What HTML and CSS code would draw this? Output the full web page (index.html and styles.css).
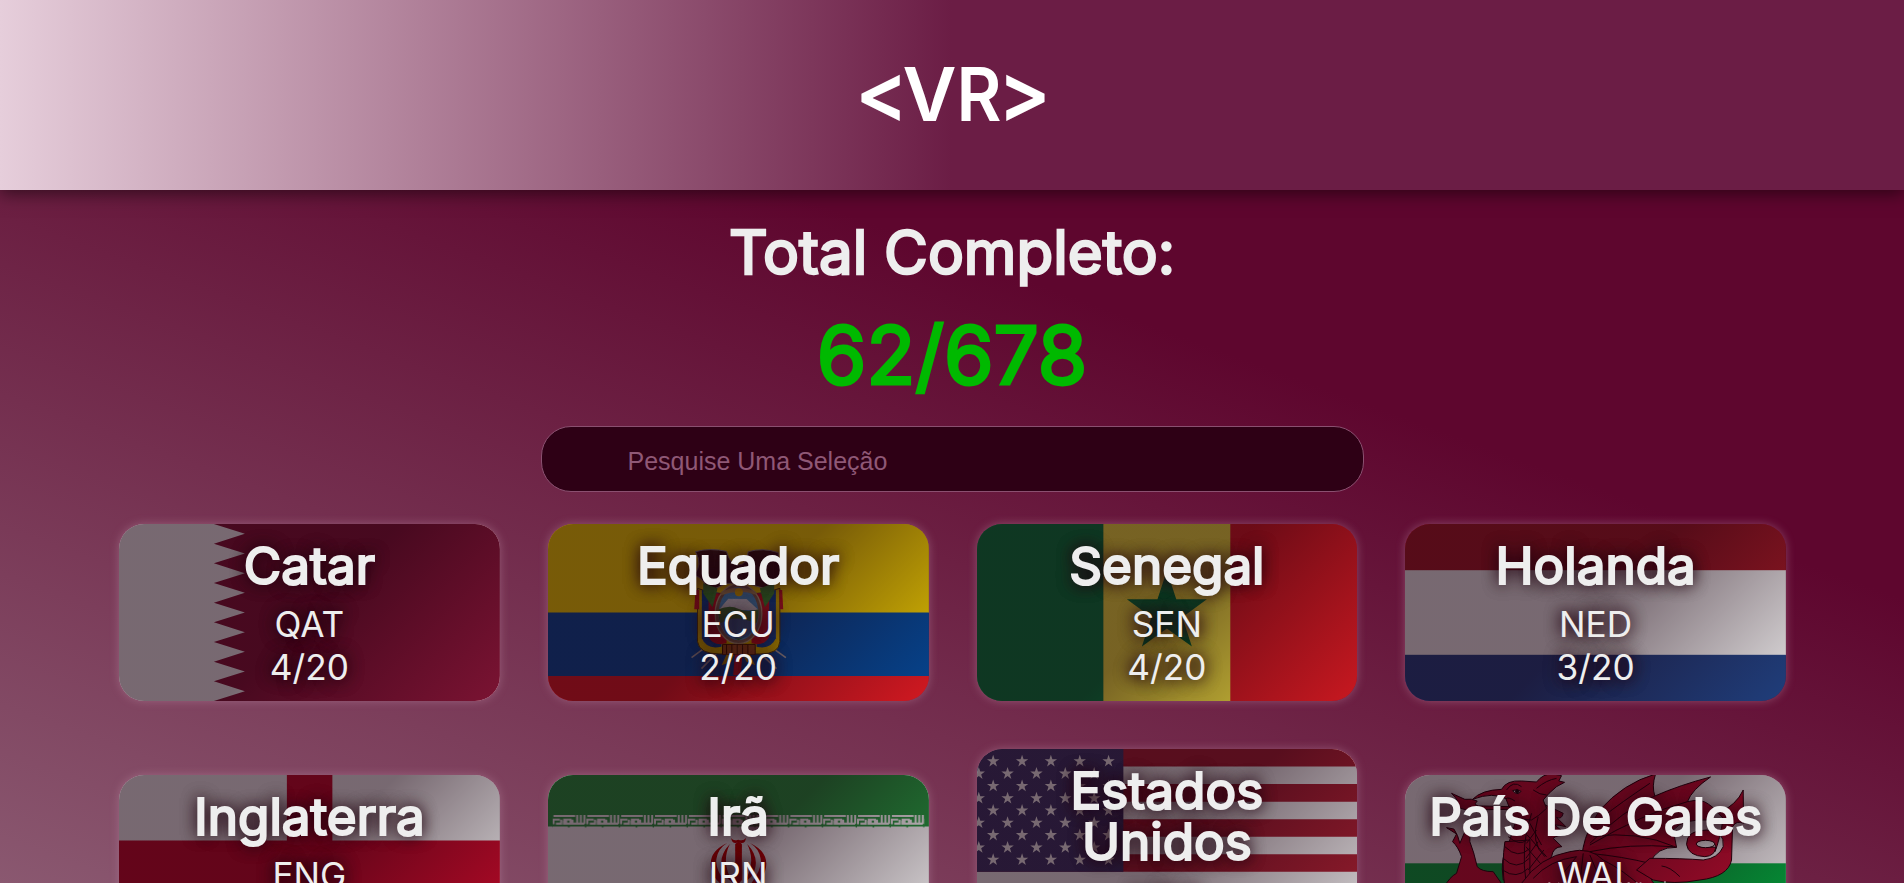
FILE: index.html
```
<!DOCTYPE html>
<html lang="pt-BR">
<head>
<meta charset="utf-8">
<title>Álbum VR</title>
<link rel="stylesheet" href="styles.css">
</head>
<body>
<header class="header">
  <svg class="logo" width="188" height="60" viewBox="0 0 188 60" role="img" aria-label="VR">
    <text class="logo-sign" x="-4" y="58" textLength="53" lengthAdjust="spacingAndGlyphs">&lt;</text>
    <text class="logo-letter" x="43.5" y="57" textLength="54" lengthAdjust="spacingAndGlyphs">V</text>
    <text class="logo-letter" x="97.500" y="57" textLength="45" lengthAdjust="spacingAndGlyphs">R</text>
    <text class="logo-sign" x="139" y="58" textLength="53" lengthAdjust="spacingAndGlyphs">&gt;</text>
  </svg>
</header>
<main class="main">
  <h1 class="total-label">Total Completo:</h1>
  <p class="total-value">62/678</p>
  <input class="search" type="text" placeholder="Pesquise Uma Seleção">
  <section class="teams">
    <article class="card">
      <svg class="flag" viewBox="0 0 381 177" preserveAspectRatio="xMidYMid slice">
        <rect width="381" height="177" fill="#fff"/>
        <path fill="#8a1538" d="M381 0H95L126 9.8 95 19.7 126 29.5 95 39.3 126 49.2 95 59 126 68.8 95 78.7 126 88.5 95 98.3 126 108.2 95 118 126 127.8 95 137.7 126 147.5 95 157.3 126 167.2 95 177H381Z"/>
      </svg>
      <h2 class="name">Catar</h2><p class="info">QAT</p><p class="info">4/20</p>
    </article>
    <article class="card">
      <svg class="flag" viewBox="0 0 381 177" preserveAspectRatio="xMidYMid slice">
        <rect width="381" height="89" fill="#fd0"/>
        <rect y="88.5" width="381" height="64" fill="#034ea2"/>
        <rect y="152" width="381" height="26" fill="#ed1c24"/>
        <g transform="scale(.33333) translate(-54 -42)">
          <path d="M485 443L570 380M768 443L680 380M515 476L570 420M740 476L680 420" stroke="#aaa" stroke-width="5"/>
          <path d="M503 235V395Q508 432 570 432H690Q748 432 750 395V235L700 250H550Z" fill="#e8c400" stroke="#57450a" stroke-width="3"/>
          <path d="M516 240V385Q530 420 575 410V250Z" fill="#0b4ea2"/>
          <path d="M536 250V380Q550 410 590 400V250Z" fill="#d81e28"/>
          <path d="M738 240V385Q722 420 680 410V250Z" fill="#0b4ea2"/>
          <path d="M718 250V380Q702 410 665 400V250Z" fill="#d81e28"/>
          <path d="M497 125Q540 113 590 124Q600 165 626 165Q650 165 655 125Q700 112 745 128Q742 165 765 195Q735 210 720 240L650 220H590L535 245Q525 205 492 195Q520 165 497 125Z" fill="#3d1c16" stroke="#999" stroke-width="3"/>
          <path d="M520 220L563 235 548 292 520 250ZM733 220L690 235 705 292 733 250Z" fill="#3c9b35"/>
          <path d="M497 240H508V298H493ZM748 240H757L760 298H750Z" fill="#d81e28"/>
          <ellipse cx="626" cy="311" rx="70" ry="90" fill="#8b7358" stroke="#cbb78c" stroke-width="4"/>
          <ellipse cx="626" cy="311" rx="60" ry="80" fill="#4fa5dc"/>
          <path d="M567 300L595 266 650 267 686 300Z" fill="#e8eef2"/>
          <path d="M566 298Q600 283 625 296T686 298Q690 360 626 391Q560 360 566 298Z" fill="#3c8a38"/>
          <path d="M572 340Q620 310 680 342L655 378Q625 394 590 375Z" fill="#397bb4"/>
          <path d="M573 246Q626 220 679 246V254Q626 236 573 256Z" fill="#b99f64"/>
          <circle cx="627" cy="247" r="12" fill="#fc0"/>
          <path d="M578 403H676V434H578Z" fill="#a95b24" stroke="#4a250b" stroke-width="3"/>
          <path d="M590 403V434M606 403V434M622 403V434M638 403V434M654 403V434" stroke="#4a250b" stroke-width="3"/>
          <path d="M590 434L575 466 604 455 612 434ZM660 434L676 466 650 455 640 434Z" fill="#c9a400"/>
          <path d="M615 434H638L632 496H610Z" fill="#d81e28"/>
        </g>
      </svg>
      <h2 class="name">Equador</h2><p class="info">ECU</p><p class="info">2/20</p>
    </article>
    <article class="card">
      <svg class="flag" viewBox="0 0 381 177" preserveAspectRatio="xMidYMid slice">
        <rect width="127" height="177" fill="#00853f"/>
        <rect x="126.5" width="127.5" height="177" fill="#fdef42"/>
        <rect x="253.5" width="128" height="177" fill="#e31b23"/>
        <path fill="#00853f" d="M190 46.500L199.400 75.300H230L205.500 93.300 215 122.500 190 104.500 165 122.500 174.500 93.300 150 75.300H180.600Z"/>
      </svg>
      <h2 class="name">Senegal</h2><p class="info">SEN</p><p class="info">4/20</p>
    </article>
    <article class="card">
      <svg class="flag" viewBox="0 0 381 177" preserveAspectRatio="xMidYMid slice">
        <rect width="381" height="47" fill="#ae1c28"/>
        <rect y="46.200" width="381" height="85" fill="#fff"/>
        <rect y="130.800" width="381" height="47" fill="#21468b"/>
      </svg>
      <h2 class="name">Holanda</h2><p class="info">NED</p><p class="info">3/20</p>
    </article>
    <article class="card">
      <svg class="flag" viewBox="0 0 381 177" preserveAspectRatio="xMidYMid slice">
        <rect width="381" height="177" fill="#fff"/>
        <path fill="#ce0b2b" d="M168 0H213.500V65.600H381V111.400H213.500V177H168V111.400H0V65.600H168Z"/>
      </svg>
      <h2 class="name">Inglaterra</h2><p class="info">ENG</p><p class="info">5/20</p>
    </article>
    <article class="card">
      <svg class="flag" viewBox="0 0 381 177" preserveAspectRatio="xMidYMid slice">
        <defs>
          <pattern id="kufic" x="68" y="255" width="101.500" height="38" patternUnits="userSpaceOnUse">
            <path d="M3 3H68M3 11V28M3 14H22M10 26H26V14M32 14H54V26H34V20H44M60 14V26H96M74 0V26M85 0V26M96 0V26" fill="none" stroke="#fff" stroke-width="6"/>
            <path d="M49 30V38M100 30V38" stroke="#239f40" stroke-width="5"/>
          </pattern>
        </defs>
        <rect width="381" height="177" fill="#fff"/>
        <rect width="381" height="51.500" fill="#239f40"/>
        <rect y="124.500" width="381" height="53" fill="#da0000"/>
        <g transform="scale(.33333) translate(-54 -135)">
          <rect x="68" y="255" width="1116" height="38" fill="url(#kufic)"/>
          <g fill="#da0000">
            <path d="M604 324Q610 334 625 329Q641 334 648 324Q647 344 626 337Q606 344 604 324Z"/>
            <path d="M616 342L626 334 636 342V450L626 462 616 450Z"/>
            <path d="M592 339Q520 372 553 440Q575 470 600 475Q553 420 560 385Q565 355 592 339Z"/>
            <path d="M660 339Q732 372 699 440Q677 470 652 475Q699 420 692 385Q687 355 660 339Z"/>
            <path d="M600 342Q555 390 588 440L612 462Q571 400 600 342ZM652 342Q697 390 664 440L640 462Q681 400 652 342Z"/>
          </g>
        </g>
      </svg>
      <h2 class="name">Irã</h2><p class="info">IRN</p><p class="info">3/20</p>
    </article>
    <article class="card">
      <svg class="flag" viewBox="0 0 381 228" preserveAspectRatio="xMidYMid slice">
        <defs>
          <path id="star" fill="#fff" d="M0-6.500L1.500-2H6.200L2.400.8 3.800 5.300 0 2.500-3.800 5.300-2.400.8-6.200-2H-1.500Z"/>
          <g id="row-a"><use href="#star" x="-12.500"/><use href="#star" x="16.300"/><use href="#star" x="45.200"/><use href="#star" x="74"/><use href="#star" x="102.900"/><use href="#star" x="131.700"/></g>
          <g id="row-b"><use href="#star" x="1.900"/><use href="#star" x="30.700"/><use href="#star" x="59.600"/><use href="#star" x="88.400"/><use href="#star" x="117.300"/></g>
        </defs>
        <rect width="381" height="228" fill="#fff"/>
        <path d="M0 8.750H381M0 43.850H381M0 78.950H381M0 114H381M0 149.100H381M0 184.200H381M0 219.300H381" stroke="#b22234" stroke-width="17.600"/>
        <rect width="146.500" height="122.800" fill="#3c3b6e"/>
        <use href="#row-a" y="12.300"/><use href="#row-b" y="24.600"/><use href="#row-a" y="36.900"/><use href="#row-b" y="49.200"/><use href="#row-a" y="61.500"/><use href="#row-b" y="73.800"/><use href="#row-a" y="86.100"/><use href="#row-b" y="98.400"/><use href="#row-a" y="110.700"/>
      </svg>
      <h2 class="name">Estados Unidos</h2><p class="info">USA</p><p class="info">4/20</p>
    </article>
    <article class="card">
      <svg class="flag" viewBox="0 0 381 177" preserveAspectRatio="xMidYMid slice">
        <rect width="381" height="177" fill="#fff"/>
        <rect y="88.300" width="381" height="89" fill="#00b140"/>
        <g transform="scale(.33333) translate(-45 -135)" fill="#d21034" stroke="#26000a" stroke-width="3" stroke-linejoin="round">
          <path d="M580 352Q590 300 630 240Q700 160 797 132Q785 170 795 198Q870 165 962 141Q905 180 893 215Q935 205 955 222Q990 240 960 270Q880 265 850 300L860 352Q800 350 780 400Q770 440 800 470H560Z"/>
          <path d="M795 198Q700 240 600 340M893 215Q760 250 600 345M860 352Q740 300 610 320M850 350Q720 340 600 365M780 160Q690 220 640 260M600 370Q700 380 780 400M598 370Q650 410 690 470" fill="none"/>
          <path d="M780 385Q880 385 940 390Q985 385 1000 350Q1005 300 950 300Q890 300 890 343Q895 378 945 380Q975 378 978 352Q965 350 945 352Q918 350 922 340Q935 330 965 335Q985 345 975 365Q990 330 1000 265L985 250Q1040 225 1060 180L1061 280Q1040 270 1028 290L1025 390Q1015 440 930 450Q850 465 790 450L740 420Z"/>
          <ellipse cx="947" cy="342" rx="28" ry="11" fill="#fff"/>
          <path d="M440 215Q470 225 520 250Q515 270 500 262L528 290Q508 285 495 285L530 315Q500 315 490 325L516 350Q490 350 485 380L430 450H340Q330 380 355 345L385 250Z"/>
          <path d="M248 208Q275 180 335 178Q350 150 395 153L440 156Q460 130 490 132L515 137 507 153 524 157 500 170Q475 190 460 210L470 235Q445 260 425 270L370 265Q358 230 348 206Q310 185 248 208Z"/>
          <path d="M440 175Q470 150 500 145M350 180Q370 150 395 170M348 206Q355 200 375 213M430 180Q450 195 470 195" fill="none"/>
          <path d="M368 182Q380 175 394 184L385 191Q372 190 368 182Z" fill="#eee"/><circle cx="382" cy="184" r="5" fill="#111"/>
          <path d="M185 190L225 208Q245 205 262 213Q245 230 280 228L360 230 360 238 230 240 195 230Q215 218 185 190Z"/>
          <path d="M170 293L192 297Q205 315 210 340L240 270 240 335Q252 365 262 410Q275 425 310 425L345 475H160Q180 440 200 430L215 380Q205 350 188 335L200 312Z"/>
          <path d="M345 335Q335 400 345 475H420V330Z"/>
          <path d="M355 320Q390 350 410 330M345 350Q385 390 420 355M340 385Q380 425 418 385M338 420Q380 450 415 415M425 250Q390 340 410 470M445 260Q420 340 465 380M420 280L455 345M412 315L470 380M408 350L460 410M440 300L410 340M445 335L408 385M462 360L415 420" fill="none"/>
          <path d="M395 460Q450 380 540 365Q600 350 640 390Q700 420 760 475H395Z"/>
          <path d="M430 445Q480 390 560 380L520 430M580 370L570 460M600 375L640 470M815 408Q840 410 870 440" fill="none"/>
        </g>
      </svg>
      <h2 class="name">País De Gales</h2><p class="info">WAL</p><p class="info">3/20</p>
    </article>
  </section>
</main>
<div class="watermark">Ativar o Windows</div>
</body>
</html>
```
FILE: styles.css
```
* {
  margin: 0;
  padding: 0;
  box-sizing: border-box;
}

body {
  height: 100vh;
  overflow: hidden;
  background: linear-gradient(20deg, #8a5870, #5e062e 62%);
  font-family: Inter, "Open Sans", sans-serif;
  color: #eee;
}

.header {
  display: flex;
  justify-content: center;
  height: 190px;
  padding-top: 64px;
  background: linear-gradient(90deg, #e6cedb, #6b1d45 50%);
  box-shadow: 0 4px 16px rgba(0, 0, 0, .5);
}

.logo {
  margin-left: 2px;
  overflow: visible;
}

.logo-letter {
  font: 600 74px Inter, sans-serif;
  fill: #fff;
}

.logo-sign {
  font: 600 84px Inter, sans-serif;
  fill: #fff;
}

.main {
  display: flex;
  flex-direction: column;
  align-items: center;
}

.total-label {
  margin-top: 25px;
  font-size: 60px;
  font-weight: 400;
  line-height: 74px;
  -webkit-text-stroke: 2.500px #eee;
}

.total-value {
  margin-top: 16px;
  font-size: 80px;
  font-weight: 400;
  line-height: 100px;
  color: #00b900;
  -webkit-text-stroke: 3px #00b900;
}

.search {
  width: 823px;
  height: 66px;
  margin-top: 21px;
  padding: 4px 86px 0;
  border: 1px solid #8a5070;
  border-radius: 30px;
  background: #2e0015;
  font: 25px "Liberation Sans", Arial, sans-serif;
  color: #eee;
}

.search::placeholder {
  color: #8f5876;
}

.teams {
  display: grid;
  grid-template-columns: repeat(4, 1fr);
  gap: 48px;
  align-items: center;
  width: 1667px;
  margin-top: 32px;
  margin-left: 1px;
}

.card {
  position: relative;
  isolation: isolate;
  overflow: hidden;
  padding: 16px 60px 12.600px;
  border-radius: 25px;
  box-shadow: 0 0 10px rgba(190, 140, 165, .45);
  text-align: center;
  text-shadow: 0 0 16px #20000f, 0 0 16px #20000f;
}

.card::before {
  content: "";
  position: absolute;
  inset: 0;
  z-index: -1;
  background: linear-gradient(135deg, rgba(25, 0, 14, .59) 50%, rgba(20, 5, 12, .13));
}

.flag {
  position: absolute;
  inset: 0;
  z-index: -2;
  width: 100%;
  height: 100%;
}

.name {
  margin: 0 -46px 12px;
  font-size: 51.200px;
  font-weight: 400;
  line-height: 51px;
  -webkit-text-stroke: 2.200px #eee;
}

.card:nth-child(7) .name {
  margin-inline: 0;
}

.info {
  font-size: 35.200px;
  line-height: 42.700px;
}

.watermark {
  position: fixed;
  top: 877px;
  left: 1543px;
  font: 20px/23px "Open Sans", sans-serif;
  color: rgba(200, 200, 200, .6);
  white-space: nowrap;
}
```
